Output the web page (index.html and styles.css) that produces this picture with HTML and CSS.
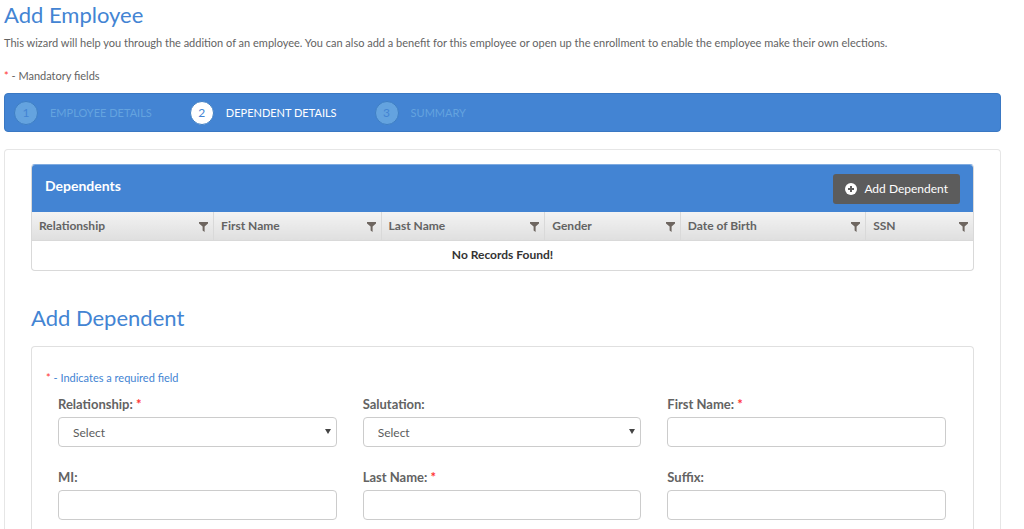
FILE: index.html
```html
<!DOCTYPE html>
<html lang="en">
<head>
    <meta charset="UTF-8">
    <meta name="viewport" content="width=device-width, initial-scale=1.0">
    <title>Add Employee</title>
    <link rel="stylesheet" href="styles.css">
</head>
<body>
    <svg width="0" height="0" class="sprite" aria-hidden="true">
        <symbol id="filter" viewBox="0 0 9 10">
            <path d="M0 0h9v1.5L5.6 4.5v5.5L3.6 8.6V4.5L0 1.5z" fill="currentColor"/>
        </symbol>
    </svg>

    <div class="page">
        <h1>Add Employee</h1>
        <p class="intro">This wizard will help you through the addition of an employee. You can also add a benefit for this employee or open up the enrollment to enable the employee make their own elections.</p>
        <p class="mandatory"><span class="req">*</span> - Mandatory fields</p>

        <!-- Wizard steps -->
        <ol class="steps">
            <li class="step"><span class="step-no">1</span>EMPLOYEE DETAILS</li>
            <li class="step active"><span class="step-no">2</span>DEPENDENT DETAILS</li>
            <li class="step"><span class="step-no">3</span>SUMMARY</li>
        </ol>

        <div class="content">
            <!-- Dependents grid -->
            <div class="grid-box">
                <div class="grid-title">
                    <h3>Dependents</h3>
                    <button type="button" class="btn-add">
                        <svg width="12" height="12" viewBox="0 0 12 12" aria-hidden="true">
                            <circle cx="6" cy="6" r="6" fill="#fff"/>
                            <path d="M6 3v6M3 6h6" stroke="#5c5c5c" stroke-width="2"/>
                        </svg>
                        Add Dependent
                    </button>
                </div>
                <table>
                    <colgroup>
                        <col class="col-rel">
                        <col class="col-first">
                        <col class="col-last">
                        <col class="col-gender">
                        <col class="col-dob">
                        <col>
                    </colgroup>
                    <thead>
                        <tr>
                            <th><div class="th">Relationship <svg class="filter"><use href="#filter"/></svg></div></th>
                            <th><div class="th">First Name <svg class="filter"><use href="#filter"/></svg></div></th>
                            <th><div class="th">Last Name <svg class="filter"><use href="#filter"/></svg></div></th>
                            <th><div class="th">Gender <svg class="filter"><use href="#filter"/></svg></div></th>
                            <th><div class="th">Date of Birth <svg class="filter"><use href="#filter"/></svg></div></th>
                            <th><div class="th">SSN <svg class="filter"><use href="#filter"/></svg></div></th>
                        </tr>
                    </thead>
                    <tbody>
                        <tr>
                            <td colspan="6">No Records Found!</td>
                        </tr>
                    </tbody>
                </table>
            </div>

            <!-- Dependent form -->
            <h2>Add Dependent</h2>
            <form class="panel">
                <p class="hint"><span class="req">*</span> - Indicates a required field</p>
                <div class="fields">
                    <div class="field">
                        <label for="relationship">Relationship: <span class="req">*</span></label>
                        <div class="select">
                            <select id="relationship"><option>Select</option></select>
                        </div>
                    </div>
                    <div class="field">
                        <label for="salutation">Salutation:</label>
                        <div class="select">
                            <select id="salutation"><option>Select</option></select>
                        </div>
                    </div>
                    <div class="field">
                        <label for="firstName">First Name: <span class="req">*</span></label>
                        <input type="text" id="firstName">
                    </div>
                    <div class="field">
                        <label for="mi">MI:</label>
                        <input type="text" id="mi">
                    </div>
                    <div class="field">
                        <label for="lastName">Last Name: <span class="req">*</span></label>
                        <input type="text" id="lastName">
                    </div>
                    <div class="field">
                        <label for="suffix">Suffix:</label>
                        <input type="text" id="suffix">
                    </div>
                </div>
            </form>
        </div>
    </div>
</body>
</html>
```
FILE: styles.css
```css
* {
    box-sizing: border-box;
}

body {
    margin: 0;
    background: #fff;
    color: #636363;
    font-family: Lato, "Liberation Sans", sans-serif;
    font-size: 11px;
    line-height: 16px;
}

h1, h2, h3, p, ol {
    margin: 0;
    padding: 0;
}

.sprite {
    position: absolute;
}

.page {
    padding: 0 23px 0 4px;
}

h1, h2 {
    color: #4384d3;
    font-size: 22px;
    font-weight: 400;
    line-height: 30px;
}

.intro {
    margin-top: 5px;
}

.mandatory {
    margin-top: 17px;
}

.req {
    color: #f33;
}

/* Wizard steps */
.steps {
    display: flex;
    align-items: center;
    gap: 38px;
    height: 39px;
    margin-top: 9px;
    padding: 0 9px;
    background: #4384d3;
    border: 1px solid #3a78c3;
    border-radius: 4px;
    list-style: none;
}

.step {
    display: flex;
    align-items: center;
    gap: 12px;
    color: #64a3df;
}

.step-no {
    width: 24px;
    height: 24px;
    background: #64a3df;
    border: 1px solid #3f7fc4;
    border-radius: 50%;
    color: #4384d3;
    font-size: 12px;
    line-height: 22px;
    text-align: center;
}

.step.active {
    color: #fff;
}

.active .step-no {
    background: #fff;
}

.content {
    margin-top: 17px;
    padding: 14px 26px 0;
    border: 1px solid #e6e6e6;
    border-bottom: none;
    border-radius: 4px 4px 0 0;
}

/* Dependents grid */
.grid-box {
    border: 1px solid #d9d9d9;
    border-top-color: #7fabe0;
    border-radius: 4px;
    overflow: hidden;
}

.grid-title {
    display: flex;
    align-items: center;
    justify-content: space-between;
    height: 47px;
    padding: 0 13px;
    background: #4384d3;
}

.grid-title h3 {
    color: #fff;
    font-size: 14px;
    padding-bottom: 5px;
}

.btn-add {
    display: flex;
    align-items: center;
    gap: 7px;
    height: 30px;
    padding: 0 12px;
    background: #5c5c5c;
    border: none;
    border-radius: 3px;
    color: #fff;
    font-family: inherit;
    font-size: 12px;
    cursor: pointer;
}

table {
    width: 100%;
    table-layout: fixed;
    border-collapse: collapse;
    font-size: 12px;
}

.col-rel { width: 19.3%; }
.col-first { width: 17.8%; }
.col-last { width: 17.4%; }
.col-gender { width: 14.4%; }
.col-dob { width: 19.7%; }

th {
    height: 28px;
    padding: 0 5px 0 7px;
    background: linear-gradient(#f3f3f3, #dfdfdf);
    border-right: 1px solid #d9d9d9;
    border-bottom: 1px solid #d9d9d9;
    text-align: left;
}

th:last-child {
    border-right: none;
}

.th {
    display: flex;
    align-items: center;
    justify-content: space-between;
}

.filter {
    width: 9px;
    height: 10px;
    margin-top: 3px;
    color: #6e6660;
}

td {
    height: 30px;
    padding: 0;
    color: #333;
    font-weight: 700;
    text-align: center;
}

/* Dependent form */
h2 {
    margin: 32px 0 13px;
}

.panel {
    padding: 23px 27px 9px 26px;
    border: 1px solid #e0e0e0;
    border-bottom: none;
    border-radius: 4px 4px 0 0;
}

.hint {
    margin-left: -12px;
    color: #4384d3;
}

.fields {
    display: grid;
    grid-template-columns: repeat(3, 1fr);
    gap: 22px 26px;
    margin-top: 10px;
}

.field label {
    display: block;
    margin-bottom: 5px;
    font-size: 13px;
    font-weight: 700;
}

.field input, .field select {
    display: block;
    width: 100%;
    height: 30px;
    padding: 0 14px;
    background: #fff;
    border: 1px solid #ccc;
    border-radius: 4px;
    color: #5c5c5c;
    font-family: inherit;
    font-size: 12px;
}

.field select {
    appearance: none;
}

.select {
    position: relative;
}

.select::after {
    content: "";
    position: absolute;
    top: 12px;
    right: 6px;
    border: 3px solid transparent;
    border-top: 5px solid #444;
    border-bottom: none;
    pointer-events: none;
}
```
